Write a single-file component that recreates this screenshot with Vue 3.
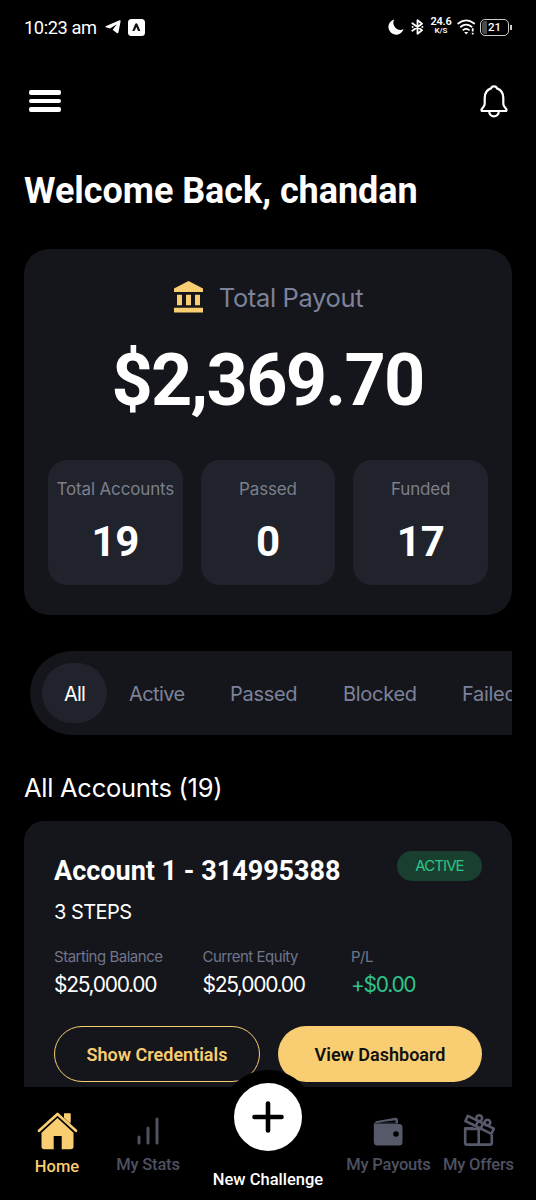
<script setup>
const stats = [
  { label: 'Total Accounts', value: '19', cls: 'accounts' },
  { label: 'Passed', value: '0', cls: 'passed' },
  { label: 'Funded', value: '17', cls: 'funded' },
]
const tabs = ['All', 'Active', 'Passed', 'Blocked', 'Failed']
const figures = [
  { label: 'Starting Balance', value: '$25,000.00' },
  { label: 'Current Equity', value: '$25,000.00' },
  { label: 'P/L', value: '+$0.00', gain: true },
]
</script>

<template>
  <div class="phone">
    <main class="content">
      <div class="status">
        <span class="time">10:23 am</span>
        <svg class="telegram" width="16" height="14" viewBox="0 0 16 14"><path d="M.6 6.2 14.6.2Q15.8 0 15.6 1.2L13.4 12.6Q13 13.8 11.8 13L7.6 9.8 11.8 4.2 5 8.4 .8 7.2Q0 6.8 .6 6.2Z" fill="#fff" /></svg>
        <svg class="app-badge" width="17" height="17" viewBox="0 0 17 17"><rect width="17" height="17" rx="3.5" fill="#fff" /><path d="M4.3 12 7 5.2Q8.3 3.5 9.6 5.2L12.4 12H10L8.3 8 7 11.3Q6.6 12 6 12Z" fill="#111" /></svg>
        <div class="indicators">
          <svg width="16" height="16" viewBox="0 0 16 16"><path d="M6.2.5A7.7 7.7 0 1 0 15.5 10.2 7.1 7.1 0 0 1 6.2.5Z" fill="#fff" /></svg>
          <svg class="bt" width="13" height="16" viewBox="0 0 13 16"><path d="M1.3 4.2 11 11.3 6.5 14.8V1.2L11 4.7 1.3 11.8" fill="none" stroke="#fff" stroke-width="1.8" stroke-linejoin="round" stroke-linecap="round" /><circle cx="1.6" cy="8" r="1" fill="#fff" /><circle cx="11.4" cy="8" r="1" fill="#fff" /></svg>
          <div class="speed"><b>24.6</b><small>K/S</small></div>
          <svg class="wifi" width="19" height="16" viewBox="0 0 19 16"><g fill="none" stroke="#fff" stroke-width="1.8" stroke-linecap="round"><path d="M1.2 4.5Q9.2-1.8 17.2 4.5M3.8 7.8Q9.2 3.5 14.6 7.8M6.3 10.9Q9.2 8.9 12 10.9" /></g><path d="M7.1 13h4.2L9.2 15.4Z" fill="#fff" /><path d="M15.7 9.3v3.3M15.7 13.8v1.6" stroke="#fff" stroke-width="1.8" /></svg>
          <div class="battery"><i></i><span>21</span></div>
        </div>
      </div>

      <header class="topbar">
        <div class="burger"><i></i><i></i><i></i></div>
        <svg width="28" height="33" viewBox="0 0 28 33" fill="none" stroke="#fff" stroke-width="2.2" stroke-linejoin="round"><path d="M11.1 3.4C11.5.7 16.5.7 16.9 3.4 21.5 5 23.3 8.7 23.3 13V18.5Q23.3 20.2 24.4 21.6L26.1 23.9Q27.3 26 25.2 26H2.8Q.7 26 1.9 23.9L3.6 21.6Q4.7 20.2 4.7 18.5V13C4.7 8.7 6.5 5 11.1 3.4Z" /><path d="M9.2 26.2C9.2 33 18.8 33 18.8 26.2" /></svg>
      </header>

      <h1>Welcome Back, chandan</h1>

      <section class="payout">
        <div class="payout-title">
          <svg width="29" height="32" viewBox="0 0 29 32" fill="#f9cd71"><path d="M14.5 0 29 7.5V11H0V7.5ZM3 13.7h5v10.5H3ZM12 13.7h5v10.5H12ZM21 13.7h5v10.5H21ZM0 26.7h29V31.5H0Z" /></svg>
          <span>Total Payout</span>
        </div>
        <div class="amount">$2,369.70</div>
        <div class="stats">
          <div v-for="s in stats" :key="s.label" class="stat">
            <span class="stat-label" :class="s.cls">{{ s.label }}</span>
            <strong>{{ s.value }}</strong>
          </div>
        </div>
      </section>

      <div class="tabs-clip">
        <nav class="tabs">
          <span v-for="(t, i) in tabs" :key="t" class="tab" :class="[t.toLowerCase(), { on: i === 0 }]">{{ t }}</span>
        </nav>
      </div>

      <h2><span>All Accounts (19)</span></h2>

      <article class="account">
        <div class="account-head">
          <h3>Account 1 - 314995388</h3>
          <span class="badge">ACTIVE</span>
        </div>
        <div class="steps">3 STEPS</div>
        <div class="figures">
          <div v-for="f in figures" :key="f.label">
            <div class="fig-label">{{ f.label }}</div>
            <div class="fig-value" :class="{ gain: f.gain }">{{ f.value }}</div>
          </div>
        </div>
        <div class="buttons">
          <button class="outline">Show Credentials</button>
          <button class="solid">View Dashboard</button>
        </div>
      </article>
    </main>

    <footer class="bottom">
      <div class="item home">
        <svg width="41" height="38" viewBox="0 0 41 38" fill="#f9cd71"><path d="M27 1.5h6.5V13L27 7Z" /><path d="M1.6 19.2 20.5 1.9 39.4 19.2" fill="none" stroke="#000" stroke-width="6" /><path d="M4.5 20.7 20.5 6 36.5 20.7V34.5Q36.5 37.2 33.8 37.2H24.7V24H16.7V37.2H7.2Q4.5 37.2 4.5 34.5Z" /><path d="M2 18.8 20.5 1.9 39 18.8" fill="none" stroke="#f9cd71" stroke-width="2.7" stroke-linecap="round" stroke-linejoin="round" /><path d="M27 1.5h6.5V11.8L27 5.8Z" /></svg>
        <span>Home</span>
      </div>
      <div class="item mystats">
        <svg width="22" height="28" viewBox="0 0 22 28" stroke="#4e5160" stroke-width="3" stroke-linecap="round"><path d="M2 20v6M11 11v15M20 2v24" /></svg>
        <span>My Stats</span>
      </div>
      <div class="item create">
        <div class="fab"><svg width="32" height="32" viewBox="0 0 32 32" stroke="#000" stroke-width="4.6" stroke-linecap="round"><path d="M16 2.5v27M2.5 16h27" /></svg></div>
        <span>New Challenge</span>
      </div>
      <div class="item payouts">
        <svg width="30" height="29" viewBox="0 0 30 29"><path d="M.8 7 2.8 4.2 22 .8Q25 .4 25 3.2V6.5H.8Z" fill="#555969" /><path d="M4 5.8 22.5 3.2V5.8Z" fill="#000" /><path d="M.8 6.2Q2 7.1 4 7.1H26Q29.5 7.1 29.5 10.5V25Q29.5 28.5 26 28.5H4.5Q.8 28.5.8 25Z" fill="#555969" /><circle cx="23" cy="17" r="2.8" fill="#000" /></svg>
        <span>My Payouts</span>
      </div>
      <div class="item offers">
        <svg width="32" height="32" viewBox="0 0 32 32" fill="none" stroke="#555969" stroke-width="2.6" stroke-linejoin="round"><path d="M10.5 14.4H2.2V29Q2.2 30.6 3.8 30.6H27.2Q28.8 30.6 28.8 29V21M2.2 15H18M15.7 15V30" /><path d="M4.8 1.9 30.8 14.7 28.5 19.8 2.4 7Z" /><path d="M15.1 7.3 12.7 12M20 9.7 17.7 14.4" /><circle cx="16.2" cy="4.2" r="2.9" /><circle cx="24.4" cy="8.6" r="2.9" /></svg>
        <span>My Offers</span>
      </div>
    </footer>
  </div>
</template>

<style>
body { background: #000; }
</style>

<style scoped>
* { box-sizing: border-box; }
.phone { width: 536px; height: 1200px; background: #000; color: #fff; font-family: Inter, "Liberation Sans", sans-serif; overflow: hidden; }
svg { display: block; flex: none; }
.content { height: 1087px; overflow: hidden; padding: 0 24px; }
.status { display: flex; align-items: center; height: 54px; font-family: Roboto, sans-serif; }
.time { font-size: 18.3px; width: 81px; padding-top: 1px; white-space: nowrap; letter-spacing: -.42px; }
.app-badge { margin-left: 7px; }
.indicators { display: flex; align-items: center; margin-left: auto; }
.bt { margin-left: 7px; }
.speed { display: flex; flex-direction: column; align-items: center; width: 22px; margin-left: 6px; margin-top: -2px; }
.speed b { font-size: 11px; line-height: 10px; font-weight: 600; letter-spacing: -.2px; }
.speed small { font-size: 8px; line-height: 8px; font-weight: 600; }
.wifi { margin-left: 5px; }
.battery { position: relative; width: 29px; height: 17px; margin: 0 3px 0 4px; border: 1.4px solid #ccc; border-radius: 5px; font-size: 11.5px; line-height: 15px; text-align: center; font-weight: 500; }
.battery i { position: absolute; left: 1px; top: 1px; bottom: 1px; width: 5px; background: #4b4b4b; border-radius: 3px 0 0 3px; }
.battery span { position: relative; }
.battery::after { content: ""; position: absolute; right: -3.5px; top: 5px; width: 1.5px; height: 5px; background: #ccc; }
.topbar { display: flex; justify-content: space-between; align-items: center; height: 94px; padding: 0 4px 0 5px; }
.burger { display: grid; gap: 4.4px; width: 32px; }
.burger i { height: 4.2px; background: #fff; border-radius: 2px; }
h1 { margin: 0; height: 101px; padding-top: 22px; font: 700 36px/42px Roboto, sans-serif; white-space: nowrap; letter-spacing: -.05px; }
.payout { height: 366px; padding: 32px 24px 0; background: #15161b; border-radius: 25px; }
.payout-title { display: flex; align-items: center; justify-content: center; gap: 16px; height: 32px; padding-left: 1px; color: #7c829a; font-size: 25.5px; font-weight: 400; }
.payout-title span { white-space: nowrap; letter-spacing: -.35px; padding-top: 1px; }
.amount { margin-top: 26px; font: 700 72px/84px Roboto, sans-serif; text-align: center; letter-spacing: -1.75px; text-indent: -1px; }
.stats { display: grid; grid-template-columns: repeat(3, 1fr); gap: 18px; margin-top: 37px; }
.stat { display: flex; flex-direction: column; align-items: center; height: 125px; padding-top: 18px; background: #20232b; border-radius: 19px; }
.stat-label { color: #7c7f8c; font-size: 17px; line-height: 22px; font-weight: 400; white-space: nowrap; letter-spacing: -.15px; }
.stat strong { margin-top: 17px; font: 700 42px/49px Roboto, sans-serif; letter-spacing: -.3px; }
.tabs-clip { margin: 36px 0 0 6px; overflow: hidden; }
.tabs { display: flex; align-items: center; width: 570px; height: 84px; padding-left: 12px; background: #15161b; border-radius: 42px; }
.tab { flex: none; height: 60px; padding: 0 22px; font-size: 20px; font-weight: 400; line-height: 62px; color: #7c829a; letter-spacing: -.3px; white-space: nowrap; }
.tab.on { color: #fff; background: #20232b; border-radius: 32px; width: 65px; letter-spacing: -.8px; }
.tab.active { width: 101px; letter-spacing: -.6px; }
.tab.passed { width: 113px; }
.tab.blocked { width: 119px; }
h2 { margin: 37px 0 0; height: 49px; font-size: 25.5px; line-height: 32px; font-weight: 400; white-space: nowrap; letter-spacing: -.27px; }
.account { height: 290px; padding: 30px 30px 0; background: #15161b; border-radius: 20px; }
.account-head { display: flex; justify-content: space-between; height: 47px; }
h3 { margin: 0; padding-top: 4px; font: 700 27px/32px Roboto, sans-serif; white-space: nowrap; }
.badge { width: 85px; height: 30px; background: #19402f; border-radius: 15px; color: #2fc489; font-size: 15px; line-height: 30px; text-align: center; letter-spacing: -.9px; }
.steps { height: 49px; font-size: 20px; line-height: 28px; letter-spacing: -.55px; }
.figures { display: grid; grid-template-columns: 148.5px 148.5px 1fr; height: 79px; white-space: nowrap; }
.fig-label { color: #71758a; font-size: 15px; line-height: 20px; letter-spacing: -.48px; }
.fig-value { font-size: 21px; line-height: 28px; padding-top: 4px; letter-spacing: -1.3px; }
.gain { color: #2fc489; }
.buttons { display: grid; grid-template-columns: 206px 204px; gap: 18px; }
button { height: 56px; padding: 0; border-radius: 28px; font: 600 18px Roboto, sans-serif; white-space: nowrap; }
.outline { border: 1.5px solid #f9cd71; background: transparent; color: #f9cd71; }
.solid { border: 0; background: #f9cd71; color: #111; }
.bottom { position: relative; display: grid; grid-template-columns: 114px 68px 172px 69px 113px; height: 113px; background: #000; font: 500 16.5px/20px Roboto, sans-serif; color: #4e5160; }
.item { display: flex; flex-direction: column; align-items: center; white-space: nowrap; }
.item span { white-space: nowrap; }
.home { padding-top: 25px; color: #f9cd71; }
.home span { margin-top: 7px; }
.mystats { padding-top: 30px; }
.mystats span, .payouts span, .offers span { margin-top: 10px; letter-spacing: -.2px; }
.payouts { padding-top: 30px; }
.payouts span, .offers span { margin-top: 9px; }
.payouts svg { margin-right: 2px; }
.offers { padding: 27px 2px 0 0; }
.offers svg { margin-left: 1px; }
.create { color: #fff; }
.fab { display: grid; place-items: center; width: 94px; height: 94px; margin-top: -17px; background: #fff; border: 13px solid #000; border-radius: 50%; flex: none; }
.create span { margin-top: 6px; }
</style>
